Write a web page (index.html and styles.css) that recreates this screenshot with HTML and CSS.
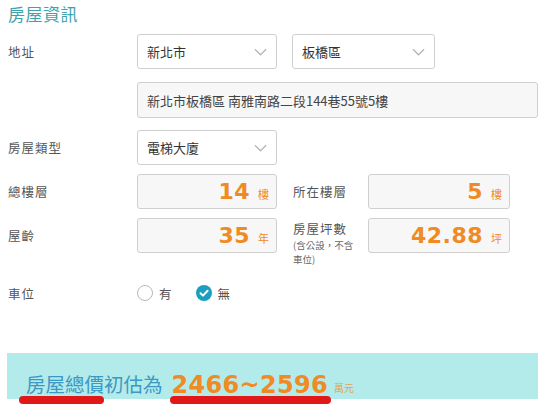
FILE: index.html
```html
<!DOCTYPE html>
<html lang="zh-Hant">
<head>
<meta charset="utf-8">
<link rel="stylesheet" href="styles.css">
</head>
<body>
<div class="page">
  <h2 class="title">房屋資訊</h2>
  <div class="row r1">
    <div class="label">地址</div>
    <div class="select w140"><span>新北市</span><svg class="chev" viewBox="0 0 14 8"><path d="M1 1 L7 7 L13 1" /></svg></div>
    <div class="select w143 ml15"><span>板橋區</span><svg class="chev" viewBox="0 0 14 8"><path d="M1 1 L7 7 L13 1" /></svg></div>
  </div>
  <div class="row r2">
    <div class="label"></div>
    <div class="input addr">新北市板橋區 南雅南路二段144巷55號5樓</div>
  </div>
  <div class="row r3">
    <div class="label">房屋類型</div>
    <div class="select w140"><span>電梯大廈</span><svg class="chev" viewBox="0 0 14 8"><path d="M1 1 L7 7 L13 1" /></svg></div>
  </div>
  <div class="row r4">
    <div class="label">總樓層</div>
    <div class="input num w140"><b>14</b><i>樓</i></div>
    <div class="label2">所在樓層</div>
    <div class="input num w142"><b>5</b><i>樓</i></div>
  </div>
  <div class="row r5">
    <div class="label">屋齡</div>
    <div class="input num w140"><b>35</b><i>年</i></div>
    <div class="label2 multi"><span class="l2main">房屋坪數</span><span class="l2sub">(含公設，不含</span><span class="l2sub">車位)</span></div>
    <div class="input num w142"><b>42.88</b><i>坪</i></div>
  </div>
  <div class="row r6">
    <div class="label">車位</div>
    <div class="radios">
      <span class="radio"></span><span class="rtext">有</span>
      <span class="radio on"><svg viewBox="0 0 16 16"><path d="M4.5 8.2 L7 10.6 L11.6 5.8" /></svg></span><span class="rtext">無</span>
    </div>
  </div>
  <div class="banner">
    <span class="btext">房屋總價初估為</span>
    <span class="bnum">2466~2596</span>
    <span class="bunit">萬元</span>
    <span class="mark m1"></span>
    <span class="mark m2"></span>
  </div>
</div>
</body>
</html>
```
FILE: styles.css
```css
html, body { margin: 0; padding: 0; background: #fff; }
body { font-family: "Noto Sans CJK TC", "Noto Sans", sans-serif; color: #444; }
.page { padding-left: 8px; width: 530px; position: relative; height: 407px; overflow: hidden; }
.title { margin: 0; padding-top: 2px; height: 32px; font-size: 17px; font-weight: 400; color: #3ea3ac; line-height: 24px; letter-spacing: 0.5px; }
.row { display: flex; align-items: center; }
.r1 { height: 35px; }
.r2 { height: 36px; margin-top: 13px; }
.r3 { height: 35px; margin-top: 12px; }
.r4 { height: 35px; margin-top: 9px; }
.r5 { height: 35px; margin-top: 9px; }
.r6 { height: 30px; margin-top: 25px; }
.label { width: 129px; flex: none; font-size: 12.5px; color: #555; letter-spacing: 1px; }
.label2 { width: 75px; margin-left: 16px; flex: none; font-size: 12.5px; color: #555; letter-spacing: 1px; }
.label2.multi { display: flex; flex-direction: column; margin-top: 14px; }
.l2main { line-height: 18px; }
.l2sub { font-size: 9.5px; line-height: 14px; letter-spacing: 0; color: #666; white-space: nowrap; }
.select, .input { box-sizing: border-box; height: 100%; border: 1px solid #cfcfcf; border-radius: 3px; display: flex; align-items: center; flex: none; }
.select { background: #fff; padding: 0 8px 0 9px; justify-content: space-between; font-size: 13px; color: #333; }
.chev { width: 13px; height: 8px; fill: none; stroke: #b5b5b5; stroke-width: 1.3; margin-right: 1px; }
.w140 { width: 140px; }
.w143 { width: 143px; }
.w142 { width: 142px; }
.ml15 { margin-left: 15px; }
.input { background: #f7f7f7; }
.addr { width: 401px; padding-left: 9px; font-size: 13px; color: #444; }
.num { justify-content: flex-end; padding-right: 7px; }
.num b { font-family: "DejaVu Sans", sans-serif; font-weight: 700; font-size: 22px; color: #f08a22; letter-spacing: 0.5px; }
.num i { font-style: normal; font-size: 11px; color: #f08a22; margin-left: 8px; margin-top: 5px; }
.radios { display: flex; align-items: center; }
.radio { width: 16px; height: 16px; box-sizing: border-box; border: 1px solid #b8b8b8; border-radius: 50%; display: inline-block; background: #fff; }
.radio.on { border: none; background: #1a9fc0; }
.radio.on svg { width: 16px; height: 16px; display: block; fill: none; stroke: #fff; stroke-width: 2; stroke-linecap: round; stroke-linejoin: round; }
.rtext { font-size: 12.5px; color: #555; margin-left: 6px; margin-right: 24px; }
.banner { position: relative; margin-top: 45px; width: 531px; margin-left: -1px; height: 46px; background: #b3ebea; display: flex; align-items: flex-end; padding-left: 19px; box-sizing: border-box; }
.btext { font-size: 19.5px; color: #3c98c4; line-height: 26px; padding-bottom: 2px; }
.bnum { font-family: "DejaVu Sans", sans-serif; font-weight: 700; font-size: 24px; color: #f08a22; margin-left: 9px; line-height: 28px; letter-spacing: 0.3px; }
.bunit { font-size: 10px; color: #e8a050; margin-left: 6px; padding-bottom: 4px; }
.mark { position: absolute; height: 8px; background: #e01818; border-radius: 4px; top: 43px; }
.m1 { left: 12px; width: 85px; }
.m2 { left: 163px; width: 161px; }
```
